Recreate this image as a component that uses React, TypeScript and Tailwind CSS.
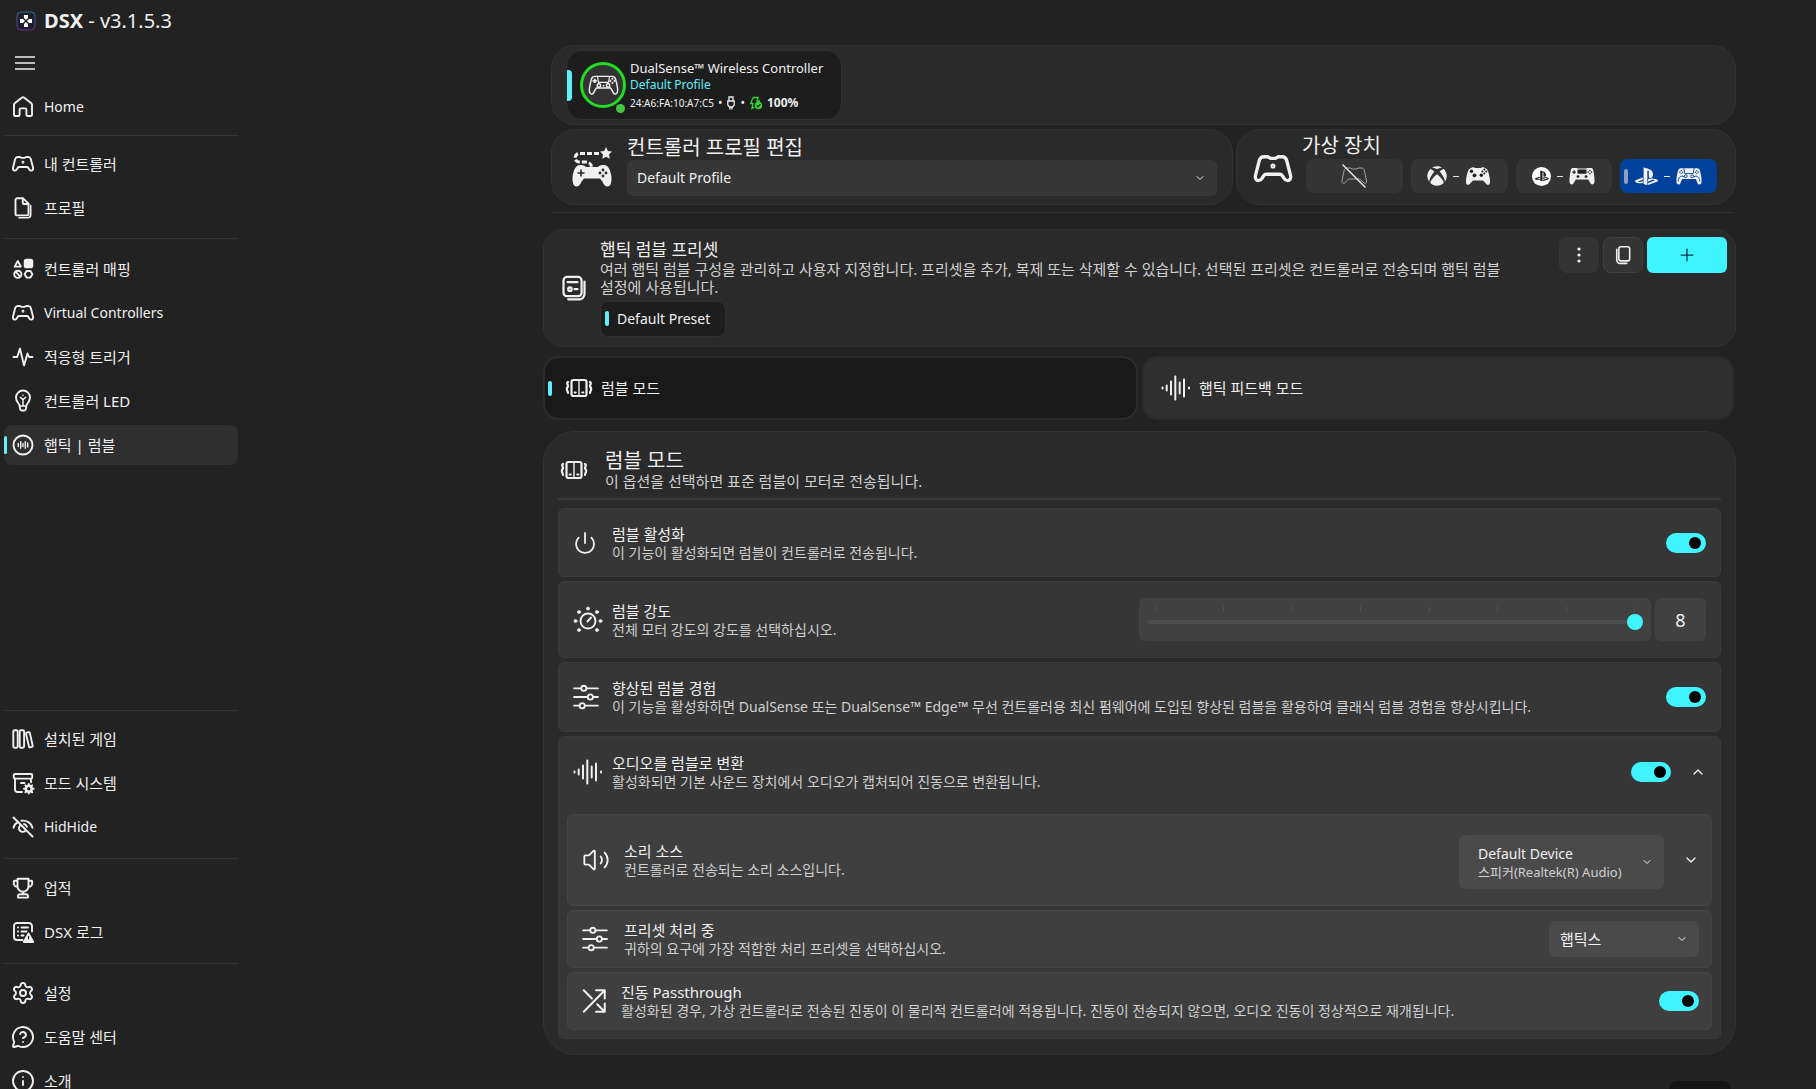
import React from 'react';
import { ChevronDown, ChevronUp, Info, MessageCircleQuestionMark, Plus, Power, Settings, Volume2 } from 'lucide-react';
import { FaPlaystation, FaXbox } from 'react-icons/fa';

type IconProps = { className?: string };

const Svg = ({ className = 'size-6', children }: { className?: string; children: React.ReactNode }) => (
  <svg
    viewBox="0 0 24 24"
    fill="none"
    stroke="currentColor"
    strokeWidth="1.9"
    strokeLinecap="round"
    strokeLinejoin="round"
    className={className}
    aria-hidden="true"
  >
    {children}
  </svg>
);

const HomeIcon = () => (
  <Svg>
    <path d="M3 9.8c0-.6.3-1.1.7-1.5l7-5.6a2 2 0 0 1 2.6 0l7 5.6c.4.4.7.9.7 1.500v9.900a1.300 1.300 0 0 1-1.300 1.300h-3a1.300 1.300 0 0 1-1.300-1.300v-5a1.300 1.300 0 0 0-1.300-1.300H9.900a1.300 1.300 0 0 0-1.300 1.300v5A1.300 1.300 0 0 1 7.300 21h-3A1.300 1.300 0 0 1 3 19.700z" />
  </Svg>
);

const PadIcon = ({ className }: IconProps) => (
  <Svg className={className}>
    <path d="M6.800 5h1.900c.9 0 1.300.9 2.200.9h2.200c.9 0 1.300-.9 2.200-.9h1.900c1.300 0 2.200.7 2.600 2l2.200 8.600c.4 1.700-.4 3-1.700 3-.9 0-1.500-.4-2-1.200l-.9-1.500c-.4-.6-.9-.9-1.600-.9H8.200c-.7 0-1.200.3-1.600.9l-.9 1.500c-.5.8-1.100 1.200-2 1.200-1.300 0-2.100-1.300-1.700-3L4.200 7c.4-1.300 1.300-2 2.600-2z" />
    <circle cx="12" cy="10.300" r=".5" fill="currentColor" />
  </Svg>
);

const PadOffIcon = () => (
  <svg viewBox="0 0 28 26" fill="none" stroke="currentColor" strokeLinejoin="round" className="h-[26px] w-7">
    <path
      d="M7 5h4l1 1h5l1-1h3c2 0 3 1 3.500 3l2 10c.3 2-1 3-2.200 2.200L19.500 16h-11l-3.800 4.200C3.500 21 1.700 20 2 18L4 8c.5-2 1.500-3 3-3z"
      className="stroke-[#a0a0a0]"
    />
    <path d="M2.500 1.500l23 23" className="stroke-gray-100" strokeWidth="1.300" />
  </svg>
);

const DocsIcon = () => (
  <Svg>
    <path d="M4.500 4A1.700 1.700 0 0 1 6.200 2.300h5.900L17.500 7.700v10a1.700 1.700 0 0 1-1.700 1.700H6.200A1.700 1.700 0 0 1 4.500 17.700z" />
    <path d="M11.800 2.500v3.900c0 .9.700 1.600 1.600 1.600h3.900" />
    <path d="M19.700 9.500v9.200a3 3 0 0 1-3 3H8" strokeWidth="1.600" />
  </Svg>
);

const ShapesIcon = () => (
  <Svg>
    <path d="M6.800 4 3.700 9.600h6.200z" />
    <rect x="13.700" y="2.800" width="7.600" height="7.600" rx="1.600" fill="currentColor" />
    <circle cx="6.800" cy="17.300" r="3.600" />
    <path d="M5 15.200l3.600 4" />
    <path d="M15.600 14h3.800l2 3.300-2 3.300h-3.800l-2-3.300z" />
  </Svg>
);

const PulseIcon = () => (
  <Svg>
    <path d="M2.500 12h3.700L9 3.600l4 16.800L16.500 8.500 18 12h3.500" />
  </Svg>
);

const BulbIcon = () => (
  <Svg>
    <path d="M8.600 16.500c-.2-1.600-3.600-3.700-3.600-8a7 7 0 0 1 14 0c0 4.300-3.400 6.400-3.600 8l-.5 3.500a1.700 1.700 0 0 1-1.700 1.500h-2.400a1.700 1.700 0 0 1-1.700-1.500z" />
    <path d="M9 17h6M12 16.500v-6.500M9.300 8.300 12 10.600l2.700-2.300M12 6.300v.1" strokeWidth="1.500" />
  </Svg>
);

const HapticIcon = () => (
  <Svg>
    <circle cx="12" cy="12" r="9.500" />
    <path d="M7.300 10.500v3M9.700 8.800v6.400M12 10.500v3M14.300 8.800v6.400M16.700 10v4" strokeWidth="1.400" />
  </Svg>
);

const BooksIcon = () => (
  <Svg>
    <rect x="2.300" y="3.300" width="4.400" height="17.400" rx="1.200" />
    <rect x="8.700" y="3.300" width="4.400" height="17.400" rx="1.200" />
    <path d="M15 6.700c-.1-.5.200-1 .7-1.100l1.900-.4c.5-.1 1 .2 1.200.700l2.900 12.800c.1.500-.2 1-.7 1.100l-1.900.5c-.5.1-1-.2-1.100-.700z" />
  </Svg>
);

const ModIcon = () => (
  <Svg>
    <rect x="2.800" y="3" width="18.400" height="4.600" rx="1" />
    <path d="M4 7.800v10.400A2.800 2.800 0 0 0 6.800 21H11M20 7.800v3.400M10 12h3.500" />
    <circle cx="17.800" cy="17.800" r="3" strokeWidth="2.600" />
    <path d="M17.800 13v1M17.800 21.600v1M13 17.800h1M21.600 17.800h1M14.400 14.400l.7.7M20.500 20.500l.7.7M14.400 21.200l.7-.7M20.500 15.100l.7-.7" strokeWidth="2" />
  </Svg>
);

const EyeOffIcon = () => (
  <Svg>
    <path d="M2.500 2.500l19 19" />
    <path d="M7.300 6.800C4.800 8.100 3 10.200 2.500 12.700M10.500 5.800c5-.8 9.800 2 11 7" />
    <path d="M9.800 10A3.700 3.700 0 1 0 14.800 15.200M13 9c1.500.3 2.500 1.300 2.900 2.800" />
  </Svg>
);

const TrophyIcon = () => (
  <Svg>
    <path d="M6.500 2.800h11v7.400a5.500 5.500 0 0 1-11 0zM6.500 4.800H3.600c-.5 0-.8.300-.8.800v1.600a3.700 3.700 0 0 0 3.700 3.700M17.500 4.800h2.900c.5 0 .8.300.8.800v1.600a3.700 3.700 0 0 1-3.700 3.700M12 15.700v2.500" />
    <path d="M7 21.600v-1.400a2 2 0 0 1 2-2h6a2 2 0 0 1 2 2v1.400z" />
  </Svg>
);

const LogIcon = () => (
  <Svg>
    <path d="M21 11.500V6a3 3 0 0 0-3-3H6a3 3 0 0 0-3 3v11a3 3 0 0 0 3 3h5.500" />
    <path d="M7 7.500h.1M7 11.500h.1M7 15.500h.1M10.500 7.500H17M10.500 11.500h5M10.500 15.500h2" />
    <path d="M17.500 13.500 12.800 22h9.400z" fill="currentColor" />
    <path d="M17.500 16.500v2.300" className="stroke-[#222222]" strokeWidth="1.200" />
  </Svg>
);

const SlidersIcon = () => (
  <Svg className="size-[26px]">
    <g strokeWidth="1.700">
      <path d="M1 4h6.500M12.500 4H23M1 12h12.500M18.500 12H23M1 20h5M11 20h12" />
      <circle cx="10" cy="4" r="2.400" />
      <circle cx="16" cy="12" r="2.400" />
      <circle cx="8.500" cy="20" r="2.400" />
    </g>
  </Svg>
);

const WaveIcon = () => (
  <svg viewBox="0 0 30 30" fill="none" stroke="currentColor" strokeWidth="2" strokeLinecap="round" className="size-[30px]">
    <path d="M1.500 14.500v1M5.700 12.500v5M10 8.500v13M14.300 3.500v23M18.700 9.500v11M23 6.500v17M28 14.500v1" />
  </svg>
);

const RumbleIcon = () => (
  <svg viewBox="0 0 28 28" fill="none" stroke="currentColor" strokeWidth="2.200" strokeLinecap="round" className="size-7">
    <rect x="6.500" y="6" width="15" height="16" rx="2" />
    <path d="M14 6v16" strokeWidth="1.400" />
    <path d="M9.600 18.500h1.200M17.200 18.500h1.200" strokeWidth="2" />
    <path d="M3 8c-2 1.500 0 2.500 0 4s-2 2-1 4 1 2 1 3M25 8c2 1.500 0 2.500 0 4s2 2 1 4-1 2-1 3" />
  </svg>
);

const DialIcon = () => (
  <svg viewBox="0 0 30 30" fill="none" stroke="currentColor" strokeWidth="1.900" strokeLinecap="round" className="size-[30px]">
    <circle cx="15" cy="16" r="7.500" />
    <path d="M14.500 16.500l3.500-4" />
    <g fill="currentColor" strokeWidth=".6">
      <circle cx="15" cy="3.500" r="1.600" />
      <circle cx="6" cy="7" r="1.600" />
      <circle cx="24" cy="7" r="1.600" />
      <circle cx="2.500" cy="16" r="1.600" />
      <circle cx="27.500" cy="16" r="1.600" />
      <circle cx="6" cy="25" r="1.600" />
      <circle cx="24" cy="25" r="1.600" />
    </g>
  </svg>
);

const ShuffleIcon = () => (
  <Svg className="size-7">
    <path d="M1.500 2.800l7 7M1.500 21.200 19.500 2.800M12 2.800h7.500v7M13 14.800l6.500 6.400M19.500 14.200v7H12" strokeWidth="1.700" />
  </Svg>
);

const PresetIcon = () => (
  <Svg className="size-7">
    <rect x="3" y="2.500" width="15.500" height="16.500" rx="3" />
    <path d="M6.500 7h8.500M12.500 13H15" />
    <circle cx="8.500" cy="13" r="1.500" />
    <path d="M21 6.500v10.700a4.500 4.500 0 0 1-4.500 4.500H7" />
  </Svg>
);

const CopyIcon = () => (
  <Svg className="size-5">
    <rect x="7" y="2" width="13" height="17" rx="2.500" />
    <path d="M4.500 5v13a4 4 0 0 0 4 4h8" />
  </Svg>
);

const DualSenseIcon = () => (
  <svg viewBox="0 0 32 24" fill="none" stroke="currentColor" strokeWidth="1.500" strokeLinejoin="round" className="h-[23px] w-[31px]">
    <path d="M7 2.500h18c2 0 3 .8 3.600 2.800 1 3.700 2.200 8.500 2.200 12 0 3.500-3.200 5-4.600 2.200l-2.600-4.800H8.400l-2.600 4.800C4.400 22.300 1.200 20.800 1.200 17.300c0-3.500 1.200-8.300 2.200-12C4 3.300 5 2.500 7 2.500z" />
    <path d="M9.700 2.500l1 6.200h10.600l1-6.200" strokeWidth="1.200" />
    <path d="M6.800 5v4.400M4.600 7.200H9" strokeWidth="2" />
    <circle cx="11.200" cy="12" r="1.800" />
    <circle cx="20.800" cy="12" r="1.800" />
    <g fill="currentColor" stroke="none">
      <circle cx="25.300" cy="5" r="1.100" />
      <circle cx="25.300" cy="9.400" r="1.100" />
      <circle cx="23.100" cy="7.200" r="1.100" />
      <circle cx="27.500" cy="7.200" r="1.100" />
      <circle cx="16" cy="12.200" r="1" />
    </g>
  </svg>
);

const DualSenseSolidIcon = () => (
  <svg viewBox="0 0 26 20" className="h-5 w-[26px]">
    <path
      fill="currentColor"
      d="M5 2.200h16c1.700 0 2.500.8 3 2.500.8 3 1.700 7 1.600 10.500 0 3.500-3 4.300-4.100 1.700L19.800 13H6.200l-1.700 3.900c-1.100 2.600-4.100 1.800-4.100-1.700C.3 11.700 1.200 7.700 2 4.700c.5-1.700 1.300-2.500 3-2.500z"
    />
    <g fill="none" className="stroke-[#00419c]" strokeWidth=".9">
      <path d="M7.800 2.200l1 5.400h8.400l1-5.400" />
      <path d="M2.200 15.500c.3-3 1-5 3.800-5.500l2.500 1M23.800 15.500c-.3-3-1-5-3.800-5.500l-2.500 1" />
      <circle cx="9.800" cy="10.200" r="1.400" />
      <circle cx="16.200" cy="10.200" r="1.400" />
    </g>
    <g className="fill-[#00419c]">
      <circle cx="5.200" cy="4.800" r=".7" />
      <circle cx="5.200" cy="7.600" r=".7" />
      <circle cx="3.800" cy="6.200" r=".7" />
      <circle cx="6.600" cy="6.200" r=".7" />
      <circle cx="20.800" cy="4.800" r=".7" />
      <circle cx="20.800" cy="7.600" r=".7" />
      <circle cx="19.400" cy="6.200" r=".7" />
      <circle cx="22.200" cy="6.200" r=".7" />
    </g>
  </svg>
);

const XboxPadIcon = () => (
  <svg viewBox="0 0 26 20" className="h-5 w-[26px]">
    <path
      fill="currentColor"
      d="M7 1.500c1-.5 2.500-.3 3.200.4h5.600c.7-.7 2.200-.9 3.200-.4l2 1c1.500.8 2.300 3 3 6 .6 2.800 1.200 5.500 1 8-.2 2.500-2.300 3-3.700 1.500L18 14.500H8l-3.300 3.500C3.300 19.500 1.200 19 1 16.500c-.2-2.500.4-5.200 1-8 .7-3 1.500-5.200 3-6z"
    />
    <g className="fill-[#222222]">
      <circle cx="6.500" cy="5.300" r="1.700" />
      <circle cx="9.500" cy="9.300" r="1.900" />
      <circle cx="16.300" cy="9.300" r="1.700" />
      <circle cx="19.300" cy="3.600" r="1" />
      <circle cx="19.300" cy="7.400" r="1" />
      <circle cx="17.400" cy="5.500" r="1" />
      <circle cx="21.200" cy="5.500" r="1" />
    </g>
  </svg>
);

const Ds4Icon = () => (
  <svg viewBox="0 0 26 20" className="h-5 w-[26px]">
    <path
      fill="currentColor"
      d="M4 2h4l.5.600h9L18 2h4c1.200 0 1.900.6 2.200 2C25 7.500 25.600 11.500 25.500 15.500c0 3.200-2.900 4-4.200 1.500L19.200 13.500H6.800L4.700 17C3.400 19.500.5 18.700.5 15.500.4 11.500 1 7.500 1.800 4 2.100 2.600 2.800 2 4 2z"
    />
    <g className="fill-[#222222]">
      <rect x="8.500" y="3.400" width="9" height="4.400" rx=".6" />
      <path d="M4.500 4.300h1.200v1.200h1.200v1.200H5.700v1.200H4.500V6.700H3.300V5.500h1.200z" />
      <circle cx="9" cy="10.600" r="1.400" />
      <circle cx="17" cy="10.600" r="1.400" />
      <circle cx="20.900" cy="4.500" r=".8" />
      <circle cx="20.900" cy="7.700" r=".8" />
      <circle cx="19.300" cy="6.100" r=".8" />
      <circle cx="22.500" cy="6.100" r=".8" />
    </g>
  </svg>
);

const ProfileEditIcon = () => (
  <svg viewBox="0 0 40 40" className="size-10">
    <path
      fill="none"
      stroke="currentColor"
      strokeWidth="3"
      strokeDasharray="5 2"
      d="M27 6.500H7.500a4.300 4.300 0 0 0 0 8.600H14c3 0 5 1.500 5.500 5"
    />
    <path fill="currentColor" d="M34 0l1.900 4 4.100.5-3 3 .8 4.200-3.800-2-3.700 2 .7-4.200-3-3 4.200-.5z" />
    <path
      fill="currentColor"
      d="M8 18c2.500 0 5 .5 6 2h12c1-1.500 3.500-2 6-2 4.500 0 6.500 5.500 7.300 11 .7 5.500-.3 10.500-4 10.500-3.300 0-4.300-5-7.300-8H12c-3 3-4 8-7.300 8-3.700 0-4.700-5-4-10.500C1.500 23.500 3.500 18 8 18z"
    />
    <path d="M9 22.500v7M5.500 26h7" className="stroke-[#2a2a2a]" strokeWidth="1.600" />
    <g className="fill-[#2a2a2a]">
      <circle cx="31" cy="23" r="1.400" />
      <circle cx="31" cy="29" r="1.400" />
      <circle cx="28" cy="26" r="1.400" />
      <circle cx="34" cy="26" r="1.400" />
    </g>
  </svg>
);

const LogoIcon = () => (
  <svg viewBox="0 0 20 20" className="size-5">
    <defs>
      <linearGradient id="logo" x1="0" y1="0" x2="0" y2="1">
        <stop offset="0" stopColor="#2f6f86" />
        <stop offset="1" stopColor="#6b2f8a" />
      </linearGradient>
    </defs>
    <rect x="1" y="1" width="18" height="18" rx="4" fill="#1f1f33" stroke="url(#logo)" />
    <g fill="#ffffff">
      <path d="M8 4h4v3l-2 2-2-2zM8 16h4v-3l-2-2-2 2zM4 8v4h3l2-2-2-2zM16 8v4h-3l-2-2 2-2z" />
    </g>
  </svg>
);

const UsbIcon = () => (
  <svg viewBox="0 0 10 14" fill="none" stroke="currentColor" strokeWidth="1.300" className="h-3.5 w-2.5">
    <path d="M3 5V1h4v4M1.800 5h6.400v4L6.500 11h-3L1.800 9zM4 11v2.500M6 11v2.500" />
  </svg>
);

const BatteryIcon = () => (
  <svg viewBox="0 0 14 14" fill="none" stroke="#34d534" strokeWidth="1.300" className="size-3.5">
    <path d="M4 1.500h5L8 5h3M4 1.500 1.700 7.500H4L3 12.500l2.500-1.500" />
    <circle cx="9.500" cy="9.500" r="3.700" fill="#34d534" stroke="none" />
    <path d="M7.700 9.500l1.300 1.300 2.300-2.500" stroke="#222222" />
  </svg>
);

type NavEntry = { icon: React.ReactNode; label: string; active?: boolean; latin?: boolean };

const navTop: NavEntry[][] = [
  [{ icon: <HomeIcon />, label: 'Home', latin: true }],
  [
    { icon: <PadIcon />, label: '내 컨트롤러' },
    { icon: <DocsIcon />, label: '프로필' }
  ],
  [
    { icon: <ShapesIcon />, label: '컨트롤러 매핑' },
    { icon: <PadIcon />, label: 'Virtual Controllers', latin: true },
    { icon: <PulseIcon />, label: '적응형 트리거' },
    { icon: <BulbIcon />, label: '컨트롤러 LED' },
    { icon: <HapticIcon />, label: '햅틱 | 럼블', active: true }
  ]
];

const navBottom: NavEntry[][] = [
  [
    { icon: <BooksIcon />, label: '설치된 게임' },
    { icon: <ModIcon />, label: '모드 시스템' },
    { icon: <EyeOffIcon />, label: 'HidHide', latin: true }
  ],
  [
    { icon: <TrophyIcon />, label: '업적' },
    { icon: <LogIcon />, label: 'DSX 로그' }
  ],
  [
    { icon: <Settings className="size-6" strokeWidth={1.9} />, label: '설정' },
    { icon: <MessageCircleQuestionMark className="size-6" strokeWidth={1.9} />, label: '도움말 센터' },
    { icon: <Info className="size-6" strokeWidth={1.9} />, label: '소개' }
  ]
];

const NavGroup = ({ items }: { items: NavEntry[] }) => (
  <ul className="flex flex-col gap-1">
    {items.map((item) => (
      <li key={item.label}>
        <a
          href="#"
          aria-current={item.active ? 'page' : undefined}
          className={`relative flex h-10 items-center gap-[9px] rounded-lg pl-[7px] ${item.latin ? 'text-sm' : 'text-[15px]'} ${item.active ? 'bg-[#2f2f2f]' : ''}`}
        >
          {item.active && <span className="absolute left-0 h-[18px] w-[3px] rounded-full bg-[#5ff0f5]"></span>}
          {item.icon}
          <span>{item.label}</span>
        </a>
      </li>
    ))}
  </ul>
);

const Sidebar = () => (
  <aside className="flex h-full w-[244px] shrink-0 flex-col pl-1 pr-1.5">
    <div className="flex h-[41px] items-center gap-2 pl-3 text-xl">
      <LogoIcon />
      <h1>
        <b>DSX</b> - v3.1.5.3
      </h1>
    </div>
    <button aria-label="Menu" className="flex h-11 items-center pl-[11px]">
      <svg viewBox="0 0 20 14" stroke="currentColor" strokeWidth="1.300" className="h-3.5 w-5">
        <path d="M0 1h20M0 7h20M0 13h20" />
      </svg>
    </button>
    <nav className="flex flex-1 flex-col pt-0.5">
      {navTop.map((items, index) => (
        <React.Fragment key={index}>
          {index > 0 && <hr className={`border-[#343434] ${index === 1 ? 'my-2' : 'my-2.5'}`} />}
          <NavGroup items={items} />
        </React.Fragment>
      ))}
      <div className="-mb-3 mt-auto">
        {navBottom.map((items, index) => (
          <React.Fragment key={index}>
            <hr className={`border-[#343434] ${index === 0 ? 'mb-2' : 'mb-[9px] mt-[11px]'}`} />
            <NavGroup items={items} />
          </React.Fragment>
        ))}
      </div>
    </nav>
  </aside>
);

const Toggle = ({ id }: { id: string }) => (
  <input
    id={id}
    type="checkbox"
    role="switch"
    defaultChecked
    className="flex h-5 w-10 shrink-0 appearance-none items-center justify-start rounded-full bg-[#555555] px-[5px] before:size-3 before:rounded-full before:bg-black checked:justify-end checked:bg-[#3ff3ff]"
  />
);

type RowProps = {
  id: string;
  icon: React.ReactNode;
  title: string;
  text: string;
  gap?: string;
  children: React.ReactNode;
};

const RowContent = ({ id, icon, title, text, gap = 'gap-[9px]', children }: RowProps) => (
  <>
    <div className={`flex min-w-0 flex-1 items-center ${gap}`}>
      <span className="flex w-[30px] shrink-0">{icon}</span>
      <div className="min-w-0">
        <label htmlFor={id} className="block text-[15px] leading-5">
          {title}
        </label>
        <p className="text-sm leading-[18px] text-[#d0d0d0]">{text}</p>
      </div>
    </div>
    {children}
  </>
);

const rowClass = 'flex items-center rounded-md border border-[#3a3a3a] bg-[#363636] pl-3.5 pr-3.5';
const innerRowClass = 'flex items-center rounded-md border border-[#444444] bg-[#3f3f3f] pl-3.5 pr-3';

const DeviceBar = () => (
  <section className="ml-2 flex h-[80px] items-center rounded-3xl border border-[#333333] bg-[#2a2a2a] pl-3.5">
    <button className="flex h-[70px] items-center rounded-2xl border border-[#303030] bg-[#1d1d1d] pr-[18px] text-left">
      <span className="h-[31px] w-[5px] rounded-r bg-[#5ff0f5]"></span>
      <span className="relative ml-2 flex size-[46px] items-center justify-center rounded-full border-[3px] border-[#22dd22] bg-[#333333]">
        <DualSenseIcon />
        <span className="absolute -bottom-2 -right-0.5 size-[9px] rounded-full bg-[#44c544]"></span>
      </span>
      <span className="ml-1 flex flex-col pt-0.5">
        <span className="text-[13px] leading-[17px]">DualSense™ Wireless Controller</span>
        <span className="text-xs leading-4 text-[#5ff0f5]">Default Profile</span>
        <span className="flex items-center gap-1 text-[10px] leading-5">
          24:A6:FA:10:A7:C5 <span className="text-xs">•</span>
          <UsbIcon />
          <span className="text-xs">•</span>
          <BatteryIcon />
          <b className="text-xs">100%</b>
        </span>
      </span>
    </button>
  </section>
);

const deviceButton = 'flex h-[34px] flex-1 items-center justify-center gap-1.5 rounded-lg';

const ProfileBar = () => (
  <div className="ml-2 mt-1 grid grid-cols-[682fr_500fr] gap-[3px]">
    <section className="flex h-[76px] min-w-0 items-center rounded-3xl border border-[#333333] bg-[#2a2a2a] pl-5 pr-[15px]">
      <span className="shrink-0">
        <ProfileEditIcon />
      </span>
      <div className="ml-[15px] flex-1 pb-0.5">
        <label htmlFor="profile" className="block text-xl leading-6">
          컨트롤러 프로필 편집
        </label>
        <div className="relative">
          <select id="profile" className="h-9 w-full appearance-none rounded-md bg-[#363636] px-2.5 text-sm">
            <option>Default Profile</option>
          </select>
          <ChevronDown className="pointer-events-none absolute right-[11px] top-3 size-3" />
        </div>
      </div>
    </section>
    <section className="flex h-[76px] min-w-0 items-center rounded-3xl border border-[#333333] bg-[#2a2a2a] pl-[15px] pr-[18px]">
      <span className="mt-1 shrink-0">
        <PadIcon className="size-[42px]" />
      </span>
      <div className="ml-2 flex-1 pb-2">
        <h2 className="text-xl leading-[26px]">가상 장치</h2>
        <div className="flex gap-2 pl-1">
          <button aria-label="None" className={`${deviceButton} bg-[#343434]`}>
            <PadOffIcon />
          </button>
          <button aria-label="Xbox 360" className={`${deviceButton} bg-[#343434]`}>
            <FaXbox className="size-5" />
            <span className="w-1.5 border-t border-gray-200"></span>
            <XboxPadIcon />
          </button>
          <button aria-label="DualShock 4" className={`${deviceButton} bg-[#343434]`}>
            <span className="flex size-[19px] items-center justify-center rounded-full bg-white text-[#222222]">
              <FaPlaystation className="size-3.5" />
            </span>
            <span className="w-1.5 border-t border-gray-200"></span>
            <Ds4Icon />
          </button>
          <button aria-label="DualSense" aria-pressed="true" className={`${deviceButton} relative bg-[#00419c]`}>
            <span className="absolute left-1 h-[15px] w-1 rounded-full bg-[#8f9fbf]"></span>
            <FaPlaystation className="size-[23px]" />
            <span className="w-1.5 border-t border-gray-200"></span>
            <DualSenseSolidIcon />
          </button>
        </div>
      </div>
    </section>
  </div>
);

const PresetCard = () => (
  <section className="mt-4 flex min-h-[118px] items-center rounded-[20px] border border-[#333333] bg-[#2a2a2a] pl-4 pr-2">
    <PresetIcon />
    <div className="ml-3 flex-1">
      <h2 className="text-[17px] leading-5">햅틱 럼블 프리셋</h2>
      <p className="max-w-[935px] break-keep text-[15px] leading-[18px] text-[#d0d0d0]">
        여러 햅틱 럼블 구성을 관리하고 사용자 지정합니다. 프리셋을 추가, 복제 또는 삭제할 수 있습니다. 선택된 프리셋은 컨트롤러로 전송되며 햅틱 럼블
        설정에 사용됩니다.
      </p>
      <button className="mt-[5px] flex h-9 items-center gap-2 rounded-lg border border-[#303030] bg-[#1d1d1d] pl-1 pr-[15px] text-sm">
        <span className="h-[15px] w-1 rounded-full bg-[#5ff0f5]"></span>
        Default Preset
      </button>
    </div>
    <div className="flex gap-1 self-start pt-[7px]">
      <button aria-label="More" className="flex h-9 w-10 items-center justify-center rounded-lg bg-[#343434]">
        <svg viewBox="0 0 4 16" fill="currentColor" className="h-4 w-1">
          <circle cx="2" cy="2" r="1.600" />
          <circle cx="2" cy="8" r="1.600" />
          <circle cx="2" cy="14" r="1.600" />
        </svg>
      </button>
      <button aria-label="Duplicate" className="flex h-9 w-10 items-center justify-center rounded-lg border border-[#404040] bg-[#343434]">
        <CopyIcon />
      </button>
      <button aria-label="Add" className="flex h-9 w-20 items-center justify-center rounded-md bg-[#3ff3ff] text-[#10393b]">
        <Plus className="size-5" strokeWidth={1.5} />
      </button>
    </div>
  </section>
);

const ModeTabs = () => (
  <div role="tablist" className="mr-0.5 mt-[9px] flex gap-1">
    <button role="tab" aria-selected="true" className="relative flex h-16 flex-1 items-center rounded-2xl border-2 border-[#2c2c2c] bg-[#191919] pl-5 text-[15px]">
      <span className="absolute left-[3px] h-[15px] w-1 rounded-full bg-[#5ff0f5]"></span>
      <RumbleIcon />
      <span className="ml-2">럼블 모드</span>
    </button>
    <button role="tab" aria-selected="false" className="flex h-16 flex-1 items-center rounded-2xl border-2 border-[#2c2c2c] bg-[#2f2f2f] pl-[17px] text-[15px]">
      <WaveIcon />
      <span className="ml-2">햅틱 피드백 모드</span>
    </button>
  </div>
);

const RumblePanel = () => (
  <section className="mt-[11px] rounded-[32px] border border-[#333333] bg-[#2a2a2a] px-3.5 pb-[15px]">
    <header className="flex items-center gap-[17px] pb-2 pl-0.5 pt-[18px]">
      <RumbleIcon />
      <div>
        <h2 className="text-xl leading-[22px]">럼블 모드</h2>
        <p className="text-[15px] leading-[18px] text-[#d0d0d0]">이 옵션을 선택하면 표준 럼블이 모터로 전송됩니다.</p>
      </div>
    </header>
    <hr className="border-t-2 border-[#3a3a3a]" />

    <div className="mt-2 flex flex-col gap-1">
      <div className={`${rowClass} h-[69px]`}>
        <RowContent id="enable" icon={<Power className="size-6" strokeWidth={1.8} />} title="럼블 활성화" text="이 기능이 활성화되면 럼블이 컨트롤러로 전송됩니다.">
          <Toggle id="enable" />
        </RowContent>
      </div>

      <div className={`${rowClass} h-[77px]`}>
        <RowContent id="strength" icon={<DialIcon />} title="럼블 강도" text="전체 모터 강도의 강도를 선택하십시오.">
          <div className="mr-1 flex h-[43px] w-[512px] flex-col rounded-md bg-[#414141] px-2 pt-2">
            <div className="flex justify-between px-2">
              {Array.from({ length: 8 }, (_, index) => (
                <span key={index} className="h-1.5 w-px bg-[#505050]"></span>
              ))}
            </div>
            <input
              id="strength"
              type="range"
              min="1"
              max="8"
              defaultValue="8"
              className="mt-0.5 h-4 w-full appearance-none bg-transparent [&::-webkit-slider-runnable-track]:h-1 [&::-webkit-slider-runnable-track]:rounded-full [&::-webkit-slider-runnable-track]:bg-[#4d4d4d] [&::-webkit-slider-thumb]:-mt-1.5 [&::-webkit-slider-thumb]:size-4 [&::-webkit-slider-thumb]:appearance-none [&::-webkit-slider-thumb]:rounded-full [&::-webkit-slider-thumb]:bg-[#3ff3ff]"
            />
          </div>
          <output htmlFor="strength" className="flex h-[43px] w-[51px] items-center justify-center rounded-md bg-[#414141] text-lg">
            8
          </output>
        </RowContent>
      </div>

      <div className={`${rowClass} h-[70px]`}>
        <RowContent
          id="enhanced"
          icon={<SlidersIcon />}
          title="향상된 럼블 경험"
          text="이 기능을 활성화하면 DualSense 또는 DualSense™ Edge™ 무선 컨트롤러용 최신 펌웨어에 도입된 향상된 럼블을 활용하여 클래식 럼블 경험을 향상시킵니다."
        >
          <Toggle id="enhanced" />
        </RowContent>
      </div>

      <div className="rounded-md border border-[#3a3a3a] bg-[#363636] pb-2">
        <div className="flex h-[69px] items-center pl-3.5 pr-3.5">
          <RowContent id="audio" icon={<WaveIcon />} title="오디오를 럼블로 변환" text="활성화되면 기본 사운드 장치에서 오디오가 캡처되어 진동으로 변환됩니다.">
            <Toggle id="audio" />
            <button aria-label="Collapse" className="ml-[19px]">
              <ChevronUp className="size-4" />
            </button>
          </RowContent>
        </div>

        <div className="mx-2 mt-2 flex flex-col gap-1">
          <div className={`${innerRowClass} h-[92px]`}>
            <RowContent id="source" gap="gap-3" icon={<Volume2 className="size-7" strokeWidth={1.6} />} title="소리 소스" text="컨트롤러로 전송되는 소리 소스입니다.">
              <div className="relative mt-1">
                <select id="source" className="h-[54px] w-[205px] appearance-none rounded-md bg-[#4a4a4a] pb-4 pl-[19px] pr-10 text-sm">
                  <option>Default Device</option>
                </select>
                <span className="pointer-events-none absolute bottom-2 left-[19px] whitespace-nowrap text-[13px] leading-[18px] text-[#d0d0d0]">
                  스피커(Realtek(R) Audio)
                </span>
                <ChevronDown className="pointer-events-none absolute right-[11px] top-[21px] size-3" />
              </div>
              <button aria-label="Expand" className="ml-[19px]">
                <ChevronDown className="size-4" />
              </button>
            </RowContent>
          </div>

          <div className={`${innerRowClass} h-[58px]`}>
            <RowContent id="processing" gap="gap-3" icon={<SlidersIcon />} title="프리셋 처리 중" text="귀하의 요구에 가장 적합한 처리 프리셋을 선택하십시오.">
              <div className="relative">
                <select id="processing" className="h-9 w-[150px] appearance-none rounded-md bg-[#4a4a4a] pl-[11px] pr-8 text-[15px]">
                  <option>햅틱스</option>
                </select>
                <ChevronDown className="pointer-events-none absolute right-[11px] top-3 size-3" />
              </div>
            </RowContent>
          </div>

          <div className={`${innerRowClass} h-[58px]`}>
            <RowContent
              id="passthrough"
              gap="gap-[9px]"
              icon={<ShuffleIcon />}
              title="진동 Passthrough"
              text="활성화된 경우, 가상 컨트롤러로 전송된 진동이 이 물리적 컨트롤러에 적용됩니다. 진동이 전송되지 않으면, 오디오 진동이 정상적으로 재개됩니다."
            >
              <Toggle id="passthrough" />
            </RowContent>
          </div>
        </div>
      </div>
    </div>
  </section>
);

const App = () => {
  return (
    <div className="relative flex h-screen overflow-hidden bg-[#222222] font-['Noto_Sans','Noto_Sans_CJK_KR',sans-serif] text-[#f0f0f0]">
      <Sidebar />
      <main className="ml-auto mr-20 w-full max-w-[1193px] pt-[45px]">
        <DeviceBar />
        <ProfileBar />
        <hr className="ml-2 mr-[3px] mt-[7px] border-[#303030]" />
        <PresetCard />
        <ModeTabs />
        <RumblePanel />
      </main>
      <div className="absolute -bottom-6 right-[85px] h-8 w-[62px] rounded-lg bg-[#151515]"></div>
    </div>
  );
};

export default App;
